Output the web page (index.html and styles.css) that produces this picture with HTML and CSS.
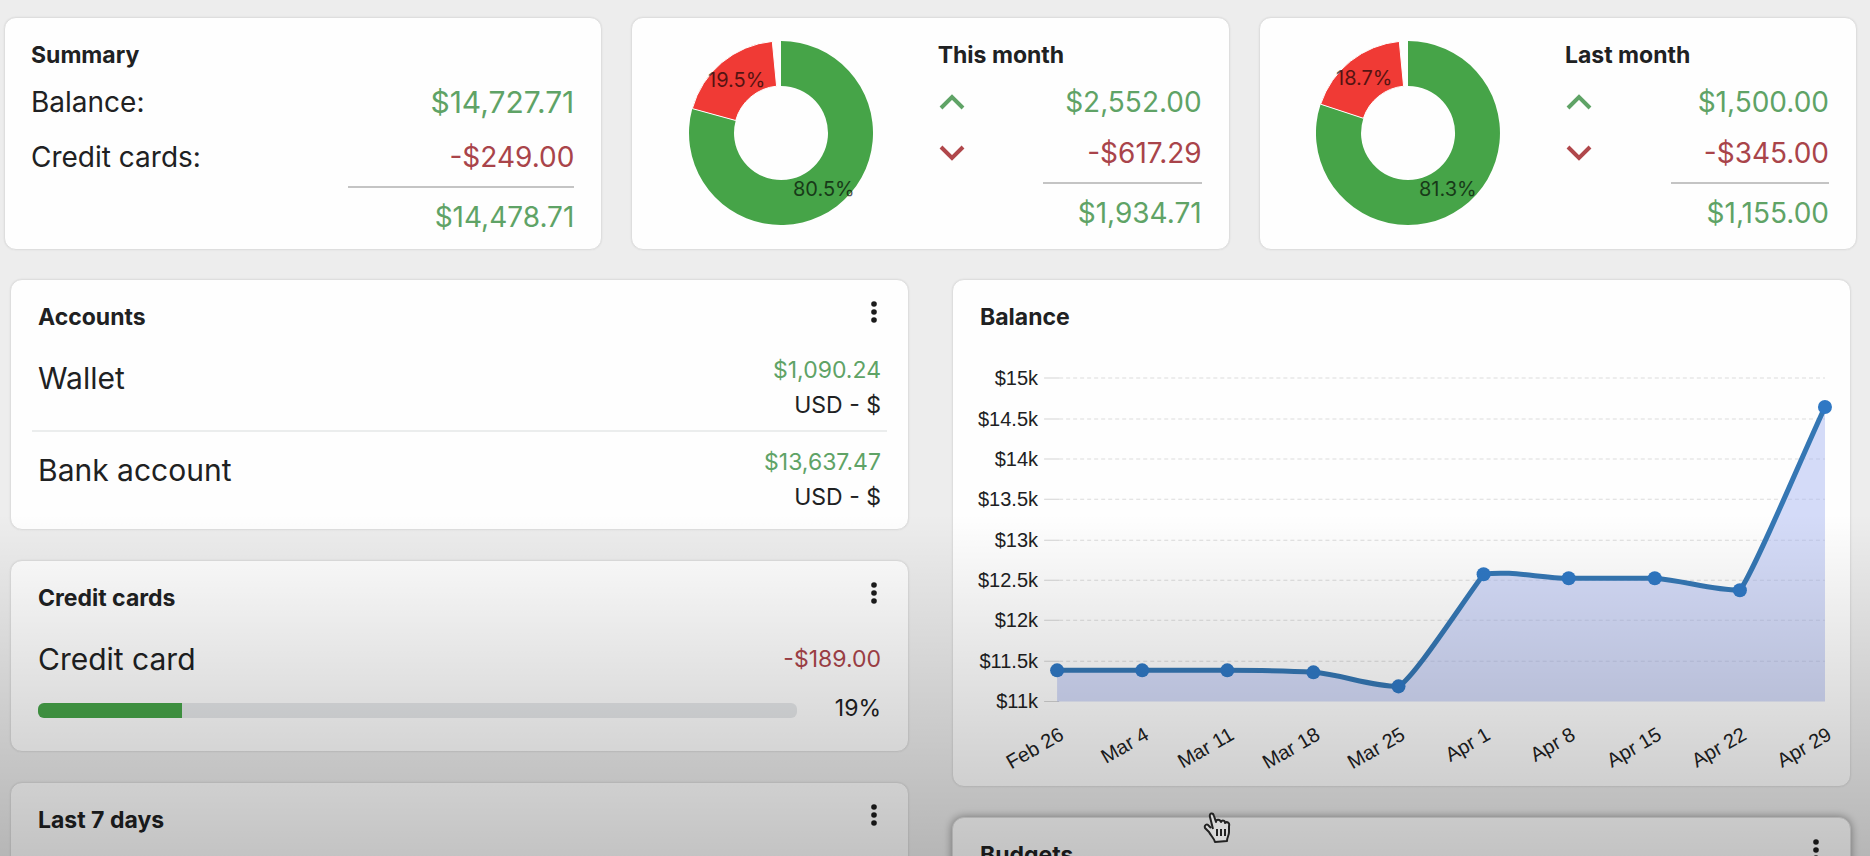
FILE: index.html
```html
<!DOCTYPE html>
<html lang="en">
<head>
<meta charset="utf-8">
<meta name="viewport" content="width=device-width, initial-scale=1">
<title>Dashboard</title>
<link rel="stylesheet" href="styles.css">
</head>
<body>
<main class="page">
  <div class="overview">
    <section class="card summary">
      <h2>Summary</h2>
      <div class="sum-row"><span>Balance:</span><span class="amount amount-lead pos">$14,727.71</span></div>
      <div class="sum-row"><span>Credit cards:</span><span class="amount neg">-$249.00</span></div>
      <div class="total total-wide amount pos">$14,478.71</div>
    </section>

    <section class="card month">
      <div class="donut-wrap">
        <svg class="donut" viewBox="-92 -92 184 184" role="img" aria-label="Income 80.5%, expenses 19.5%">
          <path class="income" d="M0 -92A92 92 0 1 1 -88.7 -24.4L-45.3 -12.5A47 47 0 1 0 0 -47Z"/>
          <path class="expense" d="M-88.7 -24.4A92 92 0 0 1 -8.7 -91.6L-4.4 -46.8A47 47 0 0 0 -45.3 -12.5Z"/>
          <text x="-73" y="-46">19.5%</text>
          <text x="12" y="63">80.5%</text>
        </svg>
      </div>
      <div class="month-info">
        <h2>This month</h2>
        <div class="month-row">
          <svg class="chevron up" viewBox="0 0 28 20" aria-hidden="true"><path d="M3 16L14 5L25 16"/></svg>
          <span class="amount pos">$2,552.00</span>
        </div>
        <div class="month-row">
          <svg class="chevron down" viewBox="0 0 28 20" aria-hidden="true"><path d="M3 4L14 15L25 4"/></svg>
          <span class="amount neg">-$617.29</span>
        </div>
        <div class="total amount pos">$1,934.71</div>
      </div>
    </section>

    <section class="card month">
      <div class="donut-wrap">
        <svg class="donut" viewBox="-92 -92 184 184" role="img" aria-label="Income 81.3%, expenses 18.7%">
          <path class="income" d="M0 -92A92 92 0 1 1 -87.4 -28.8L-44.6 -14.7A47 47 0 1 0 0 -47Z"/>
          <path class="expense" d="M-87.4 -28.8A92 92 0 0 1 -8.7 -91.6L-4.4 -46.8A47 47 0 0 0 -44.6 -14.7Z"/>
          <text x="-72" y="-48">18.7%</text>
          <text x="11" y="63">81.3%</text>
        </svg>
      </div>
      <div class="month-info">
        <h2>Last month</h2>
        <div class="month-row">
          <svg class="chevron up" viewBox="0 0 28 20" aria-hidden="true"><path d="M3 16L14 5L25 16"/></svg>
          <span class="amount pos">$1,500.00</span>
        </div>
        <div class="month-row">
          <svg class="chevron down" viewBox="0 0 28 20" aria-hidden="true"><path d="M3 4L14 15L25 4"/></svg>
          <span class="amount neg">-$345.00</span>
        </div>
        <div class="total amount pos">$1,155.00</div>
      </div>
    </section>
  </div>

  <div class="columns">
    <div class="column">
      <section class="card panel">
        <header class="panel-head">
          <h2>Accounts</h2>
          <button class="menu" type="button" aria-label="Accounts menu"><svg viewBox="0 0 10 24"><circle cx="5" cy="4" r="2.8"/><circle cx="5" cy="12" r="2.8"/><circle cx="5" cy="20" r="2.8"/></svg></button>
        </header>
        <ul class="accounts">
          <li><span class="name">Wallet</span><span class="figures"><span class="pos">$1,090.24</span><span>USD - $</span></span></li>
          <li><span class="name">Bank account</span><span class="figures"><span class="pos">$13,637.47</span><span>USD - $</span></span></li>
        </ul>
      </section>

      <section class="card panel">
        <header class="panel-head">
          <h2>Credit cards</h2>
          <button class="menu" type="button" aria-label="Credit cards menu"><svg viewBox="0 0 10 24"><circle cx="5" cy="4" r="2.8"/><circle cx="5" cy="12" r="2.8"/><circle cx="5" cy="20" r="2.8"/></svg></button>
        </header>
        <div class="credit">
          <div class="credit-row"><span class="name" id="card-name">Credit card</span><span class="neg">-$189.00</span></div>
          <div class="usage">
            <div class="track" role="progressbar" aria-labelledby="card-name" aria-valuemin="0" aria-valuemax="100" aria-valuenow="19"><div class="fill" style="width:19%"></div></div>
            <span>19%</span>
          </div>
        </div>
      </section>

      <section class="card panel rest">
        <header class="panel-head">
          <h2>Last 7 days</h2>
          <button class="menu" type="button" aria-label="Last 7 days menu"><svg viewBox="0 0 10 24"><circle cx="5" cy="4" r="2.8"/><circle cx="5" cy="12" r="2.8"/><circle cx="5" cy="20" r="2.8"/></svg></button>
        </header>
      </section>
    </div>

    <div class="column">
      <section class="card panel">
        <header class="panel-head"><h2>Balance</h2></header>
        <svg class="chart" viewBox="0 0 896 440" role="img" aria-label="Balance over time">
          <path class="grid" d="M106 32H871M106 73H871M106 113H871M106 153H871M106 194H871M106 234H871M106 274H871M106 315H871"/>
          <path class="ticks" d="M91 32h15M91 73h15M91 113h15M91 153h15M91 194h15M91 234h15M91 274h15M91 315h15M91 355h15"/>
          <path class="area" d="M104 324L274 324C302 324 332 324 360 326C388 328 417 340 445 340C460 332 505 262 530 228C558 224 587 232 615 232L701 232C729 234 758 244 786 244C800 226 848 110 871 61V355H104Z"/>
          <path class="line" d="M104 324L274 324C302 324 332 324 360 326C388 328 417 340 445 340C460 332 505 262 530 228C558 224 587 232 615 232L701 232C729 234 758 244 786 244C800 226 848 110 871 61"/>
          <g class="points"><circle cx="104" cy="324" r="7"/><circle cx="189" cy="324" r="7"/><circle cx="274" cy="324" r="7"/><circle cx="360" cy="326" r="7"/><circle cx="445" cy="340" r="7"/><circle cx="530" cy="228" r="7"/><circle cx="615" cy="232" r="7"/><circle cx="701" cy="232" r="7"/><circle cx="786" cy="244" r="7"/><circle cx="871" cy="61" r="7"/></g>
          <g class="axis">
            <text x="85" y="39">$15k</text><text x="85" y="80">$14.5k</text><text x="85" y="120">$14k</text><text x="85" y="160">$13.5k</text><text x="85" y="201">$13k</text><text x="85" y="241">$12.5k</text><text x="85" y="281">$12k</text><text x="85" y="322">$11.5k</text><text x="85" y="362">$11k</text>
            <text transform="translate(112 392) rotate(-30)">Feb 26</text>
            <text transform="translate(197 392) rotate(-30)">Mar 4</text>
            <text transform="translate(282 392) rotate(-30)">Mar 11</text>
            <text transform="translate(368 392) rotate(-30)">Mar 18</text>
            <text transform="translate(453 392) rotate(-30)">Mar 25</text>
            <text transform="translate(538 392) rotate(-30)">Apr 1</text>
            <text transform="translate(623 392) rotate(-30)">Apr 8</text>
            <text transform="translate(709 392) rotate(-30)">Apr 15</text>
            <text transform="translate(794 392) rotate(-30)">Apr 22</text>
            <text transform="translate(879 392) rotate(-30)">Apr 29</text>
          </g>
        </svg>
      </section>

      <section class="card panel rest raised">
        <header class="panel-head">
          <h2>Budgets</h2>
          <button class="menu" type="button" aria-label="Budgets menu"><svg viewBox="0 0 10 24"><circle cx="5" cy="4" r="2.8"/><circle cx="5" cy="12" r="2.8"/><circle cx="5" cy="20" r="2.8"/></svg></button>
        </header>
      </section>
    </div>
  </div>
  <div class="shade"></div>
  <svg class="pointer" viewBox="0 0 28 32" aria-hidden="true">
    <path class="hand" d="M10 17L7 5C6 1 10 0 11 4L13 10C13 7 17 7 18 10C19 8 22 8 22 11C24 9 27 11 26 14V20C26 24 24 25 24 29L12 30C11 26 8 24 6 20L2 16C1 13 4 11 6 14L8 16"/>
    <path class="creases" d="M14 17V24M18 17V24M22 17V24"/>
  </svg>
</main>
</body>
</html>
```
FILE: styles.css
```css
* { box-sizing: border-box; }

body {
  margin: 0;
  background: #ededed;
  color: #202122;
  font-family: Inter, "Liberation Sans", sans-serif;
  font-size: 23px;
}

h2, ul { margin: 0; padding: 0; }
h2 { font-size: 23px; font-weight: 700; line-height: 28px; }
ul { list-style: none; }

.page {
  position: relative;
  height: 100vh;
  overflow: hidden;
  padding: 17px 13px 0 4px;
}

.card {
  background: #fefefe;
  border: 1px solid #dedede;
  border-radius: 12px;
  box-shadow: 0 0 2px rgba(0, 0, 0, 0.08);
}

.pos { color: #5fa366; }
.neg { color: #a9444a; }

/* Overview row */
.overview {
  display: grid;
  grid-template-columns: repeat(3, 1fr);
  gap: 29px;
}

.overview .card { padding: 23px 27px 15px 26px; }

.amount { font-size: 28px; line-height: 34px; }
.amount-lead { font-size: 30px; }

.sum-row {
  display: flex;
  justify-content: space-between;
  margin-top: 16px;
  font-size: 28px;
  line-height: 34px;
}
.sum-row + .sum-row { margin-top: 21px; }

.total {
  width: 60%;
  margin: 12px 0 0 auto;
  padding-top: 12px;
  border-top: 2px solid #c4c4c4;
  text-align: right;
}
.total-wide { width: 226px; }

.month { display: flex; }
.donut-wrap {
  flex: 1;
  display: flex;
  justify-content: center;
  padding-right: 34px;
}
.donut { width: 184px; height: 184px; }
.donut text { font-size: 20px; fill: #000; opacity: 0.65; }
.income { fill: #46a448; }
.expense { fill: #f03a35; stroke: #fff; stroke-width: 1; }

.month-info { width: 264px; }
.month-row {
  display: flex;
  align-items: center;
  justify-content: space-between;
  margin-top: 16px;
}
.month-row + .month-row { margin-top: 17px; }
.chevron { width: 28px; height: 20px; fill: none; stroke-width: 4; }
.up { stroke: #5fa366; }
.down { stroke: #b0474b; }

/* Panels */
.columns {
  display: grid;
  grid-template-columns: repeat(2, 1fr);
  gap: 43px;
  margin-top: 29px;
  padding: 0 6px;
}
.column { display: flex; flex-direction: column; gap: 30px; }

.panel-head {
  display: flex;
  align-items: flex-start;
  justify-content: space-between;
  padding: 20px 27px 22px;
}
.panel-head h2 { padding-top: 3px; }
.menu {
  display: flex;
  width: 14px;
  height: 24px;
  padding: 0 2px;
  border: 0;
  background: none;
  cursor: pointer;
}
.menu svg { width: 10px; height: 24px; fill: #1c1c1c; }

.name { font-size: 30px; line-height: 50px; }

.accounts { padding: 0 21px 14px; }
.accounts li {
  display: flex;
  justify-content: space-between;
  padding: 0 6px;
}
.accounts li + li {
  margin-top: 7px;
  padding-top: 13px;
  border-top: 2px solid #ebeded;
}
.figures {
  display: flex;
  flex-direction: column;
  align-items: flex-end;
  line-height: 35px;
}

.credit { padding: 0 27px 28px; }
.credit-row {
  display: flex;
  justify-content: space-between;
  line-height: 50px;
}
.usage {
  display: flex;
  align-items: center;
  justify-content: space-between;
  margin-top: 9px;
  line-height: 30px;
}
.track {
  flex: 0 1 90%;
  height: 15px;
  margin-top: 5px;
  border-radius: 6px;
  overflow: hidden;
  background: #e6e8ea;
}
.fill { height: 100%; background: #46a448; }

.rest { min-height: 240px; }
.raised { box-shadow: 0 0 8px rgba(0, 0, 0, 0.4); }

/* Balance chart */
.chart { display: block; width: 100%; height: auto; margin-top: -7px; }
.grid { fill: none; stroke: #dcdcdc; stroke-dasharray: 4 3; }
.ticks { fill: none; stroke: #d4d4d4; }
.area { fill: #aab8f2; opacity: 0.5; }
.line { fill: none; stroke: #3577b4; stroke-width: 5; stroke-linejoin: round; }
.points { fill: #2f78c4; }
.axis { font-family: "Liberation Sans", Arial, sans-serif; font-size: 20px; text-anchor: end; fill: #202122; }

/* Darkening towards the foot of the window */
.shade {
  position: absolute;
  inset: 60% 0 0;
  background: linear-gradient(rgba(0, 0, 0, 0), rgba(0, 0, 0, 0.23));
  pointer-events: none;
}

.pointer {
  position: absolute;
  top: 812px;
  left: 1203px;
  width: 28px;
  height: 32px;
  pointer-events: none;
}
.hand { fill: #d8d8d8; stroke: #222; stroke-width: 2; stroke-linejoin: round; }
.creases { fill: none; stroke: #222; stroke-width: 2; }
```
